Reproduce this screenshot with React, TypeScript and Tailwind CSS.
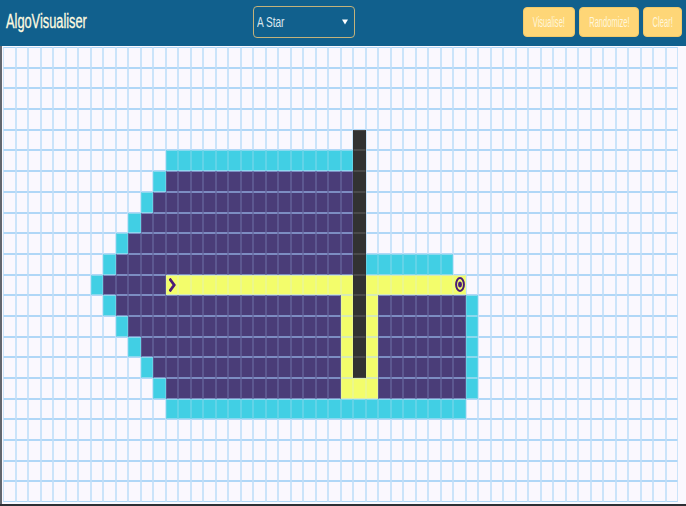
import React from "react";

const COLS = 54;
const ROWS = 22;

type T = "." | "v" | "c" | "y" | "w" | "s" | "t";

function buildGrid(): T[][] {
  const g: T[][] = Array.from({ length: ROWS }, () => Array.from({ length: COLS }, () => "." as T));
  const fill = (r: number, a: number, b: number, t: T) => {
    for (let c = a; c <= b; c++) g[r][c] = t;
  };
  for (let r = 4; r <= 15; r++) g[r][28] = "w";
  fill(5, 13, 27, "c");
  for (let r = 6; r <= 10; r++) {
    const start = 12 - (r - 6);
    g[r][start] = "c";
    fill(r, start + 1, 27, "v");
  }
  fill(10, 29, 35, "c");
  g[11][7] = "c";
  fill(11, 8, 12, "v");
  g[11][13] = "s";
  fill(11, 14, 27, "y");
  fill(11, 29, 35, "y");
  g[11][36] = "t";
  for (let r = 12; r <= 16; r++) {
    const start = 8 + (r - 12);
    g[r][start] = "c";
    fill(r, start + 1, 26, "v");
    g[r][27] = "y";
    if (r === 16) g[r][28] = "y";
    g[r][29] = "y";
    fill(r, 30, 36, "v");
    g[r][37] = "c";
  }
  fill(17, 13, 36, "c");
  return g;
}

const cellCls: Record<T, string> = {
  ".": "bg-[#faf8fe] border-y-[#b0d7f7] border-x-[#cbe4fa]",
  v: "bg-[#4a3d78] border-y-[#7d8dc2] border-x-[#5c5890]",
  c: "bg-[#41cfe4] border-y-[#8ad9ee] border-x-[#62d3e7]",
  y: "bg-[#f3fd6b] border-y-[#d6ebb7] border-x-[#ecf88c]",
  s: "bg-[#f3fd6b] border-y-[#d6ebb7] border-x-[#ecf88c]",
  t: "bg-[#f3fd6b] border-y-[#d6ebb7] border-x-[#ecf88c]",
  w: "bg-[#323232] border-y-[#4a4a4a] border-x-[#323232]",
};

function Chevron() {
  return (
    <svg width="7" height="14" viewBox="0 0 7 14" preserveAspectRatio="none" className="shrink-0">
      <path d="M1.4 1.8 L5.2 7 L1.4 12.2" fill="none" stroke="#4a1a78" strokeWidth="2.8" strokeLinecap="square" strokeLinejoin="miter" />
    </svg>
  );
}

function Target() {
  return (
    <svg width="10" height="15" viewBox="0 0 10 15" preserveAspectRatio="none" className="shrink-0">
      <ellipse cx="5" cy="7.5" rx="3.9" ry="6.4" fill="none" stroke="#4a1a78" strokeWidth="2" />
      <ellipse cx="5" cy="7.5" rx="1.9" ry="3" fill="#4a1a78" />
    </svg>
  );
}

export default function App() {
  const grid = buildGrid();
  return (
    <div className="w-[686px] h-[506px] flex flex-col overflow-hidden bg-[#faf8fe] font-['Liberation_Sans',Arial,sans-serif]">
      <header className="h-[46px] shrink-0 flex items-start bg-[#11608d]">
        <div className="w-[253px] shrink-0 pl-[6px] pt-[9.5px]">
          <span className="inline-block origin-left scale-x-[0.64] text-[20px] leading-[22px] text-[#fffbe0] whitespace-nowrap [-webkit-text-stroke:0.3px_#fffbe0]">
            AlgoVisualiser
          </span>
        </div>
        <div className="mt-[6px] h-[32px] w-[102px] shrink-0 flex items-center justify-between rounded-[4px] border border-[#c4b27a] pl-[3px] pr-[6px]">
          <span className="inline-block origin-left scale-x-[0.72] text-[14px] leading-[16px] text-[#dbe7ee] whitespace-nowrap">
            A Star
          </span>
          <svg width="6" height="6" viewBox="0 0 6 6">
            <polygon points="0,0.5 6,0.5 3,5.5" fill="#ffffff" />
          </svg>
        </div>
        <div className="ml-auto mr-[4px] mt-[7px] flex gap-[4px]">
          {[
            { label: "Visualise!", w: "w-[52px]" },
            { label: "Randomize!", w: "w-[60px]" },
            { label: "Clear!", w: "w-[39px]" },
          ].map((b) => (
            <div
              key={b.label}
              className={`${b.w} h-[30px] flex items-center justify-center rounded-[4px] border border-[#f1c96a] bg-[#fed677]`}
            >
              <span className="inline-block origin-center scale-x-[0.54] text-[14px] leading-[16px] text-[#fff6dc] whitespace-nowrap">
                {b.label}
              </span>
            </div>
          ))}
        </div>
      </header>
      <main className="flex-1 border-l-2 border-[#62666e] pl-[1.3px] pt-[1px]">
        <div className="grid grid-cols-[repeat(54,12.5px)] grid-rows-[repeat(22,20.7px)]">
          {grid.map((row, r) =>
            row.map((t, c) => (
              <div key={`${r}-${c}`} className={`border flex items-center justify-center overflow-visible ${cellCls[t]}`}>
                {t === "s" && <Chevron />}
                {t === "t" && <Target />}
              </div>
            ))
          )}
        </div>
      </main>
      <div className="h-[2px] shrink-0 bg-[#2c2f35]" />
    </div>
  );
}
